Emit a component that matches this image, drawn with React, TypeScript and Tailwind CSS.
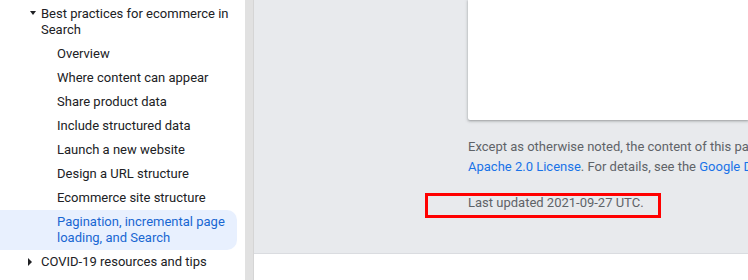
import React from "react";

const items = [
  "Overview",
  "Where content can appear",
  "Share product data",
  "Include structured data",
  "Launch a new website",
  "Design a URL structure",
  "Ecommerce site structure",
];

export default function App() {
  return (
    <div
      className="flex h-[280px] w-[748px] overflow-hidden bg-white"
      style={{ fontFamily: "Roboto, 'Noto Sans', sans-serif" }}
    >
      {/* Sidebar */}
      <div className="w-[245px] shrink-0 bg-white pt-[2px] text-[13px] leading-[16px] text-[#202124]">
        <div className="relative flex py-[4px] pl-[41px] pr-[8px]">
          <span className="absolute left-[30px] top-[9px] h-0 w-0 border-x-[3.5px] border-t-[4px] border-x-transparent border-t-[#202124]" />
          <span>Best practices for ecommerce in Search</span>
        </div>
        {items.map((t) => (
          <div key={t} className="py-[4px] pl-[57px] pr-[8px]">
            {t}
          </div>
        ))}
        <div className="mr-[8px] rounded-r-[10px] bg-[#e8f0fe] py-[4px] pl-[57px] pr-[8px] text-[#1967d2]">
          Pagination, incremental page loading, and Search
        </div>
        <div className="relative py-[4px] pl-[41px] pr-[8px]">
          <span className="absolute left-[28px] top-[8px] h-0 w-0 border-y-[4px] border-l-[4px] border-y-transparent border-l-[#202124]" />
          COVID-19 resources and tips
        </div>
      </div>

      {/* Scrollbar */}
      <div className="flex w-[9px] shrink-0 bg-[#e1e1e1]">
        <div className="ml-auto w-[1px] bg-[#d5d5d5]" />
      </div>

      {/* Main */}
      <div className="flex min-w-0 flex-1 flex-col overflow-hidden">
        <div className="h-[254px] shrink-0 border-b border-[#dadce0] bg-[#e8eaed] pl-[214px]">
          <div className="h-[120px] rounded-bl-[2px] bg-white shadow-[0_1px_2px_0_rgba(60,64,67,0.3),0_1px_3px_1px_rgba(60,64,67,0.15)]" />
          <p className="mt-[17px] whitespace-nowrap text-[13px] leading-[20px] text-[#5f6368]">
            Except as otherwise noted, the content of this page is licensed under the Creative Commons
            <br />
            <a className="text-[#1a73e8]">Apache 2.0 License</a>. For details, see the{" "}
            <a className="text-[#1a73e8]">Google Developers Site Policies</a>.
          </p>
          <div className="relative mt-[16px] text-[13px] leading-[20px] text-[#5f6368]">
            Last updated 2021-09-27 UTC.
            <div className="absolute left-[-43px] top-0 h-[25px] w-[236px] border-[3px] border-[#ff0000]" />
          </div>
        </div>
        <div className="flex-1 bg-white" />
      </div>
    </div>
  );
}
